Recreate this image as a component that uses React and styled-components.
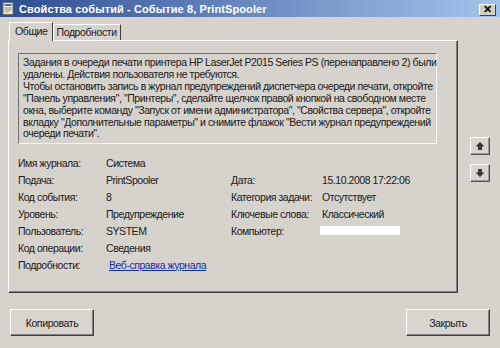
import React from 'react';
import styled, { createGlobalStyle } from 'styled-components';

const GlobalStyle = createGlobalStyle`
  html, body {
    margin: 0;
    padding: 0;
    width: 500px;
    height: 348px;
    overflow: hidden;
    background: #d4d0c8;
  }
  body {
    font-family: "Liberation Sans", Arial, sans-serif;
    color: #1a1a1a;
  }
`;

const Window = styled.div`
  width: 500px;
  height: 348px;
  display: flex;
  flex-direction: column;
  background: #d6d2cc;
`;

const TitleBar = styled.div`
  height: 17px;
  display: flex;
  align-items: center;
  padding: 0 4px 0 2px;
  background: linear-gradient(90deg, #2c4c90 0%, #5878b4 35%, #a2c4ec 100%);
`;

const TitleIcon = styled.svg`
  width: 13px;
  height: 13px;
  flex: none;
`;

const TitleText = styled.span`
  margin-left: 4px;
  flex: 1;
  color: #fff;
  font-weight: bold;
  font-size: 11px;
  letter-spacing: 0.1px;
  white-space: nowrap;
`;

const CloseBox = styled.div`
  width: 17px;
  height: 12px;
  margin-top: 2px;
  box-sizing: border-box;
  display: flex;
  align-items: center;
  justify-content: center;
  background: #d4d0c8;
  border: 1px solid;
  border-color: #fff #404040 #404040 #fff;
  font-size: 11px;
  font-weight: bold;
  line-height: 1;
  color: #000;
`;

const Body = styled.div`
  display: flex;
  padding: 5px 0 0 8px;
`;

const Sheet = styled.div`
  width: 450px;
  display: flex;
  flex-direction: column;
`;

const TabRow = styled.div`
  display: flex;
  align-items: flex-end;
  height: 18px;
  padding-left: 1px;
`;

const Tab = styled.div`
  box-sizing: border-box;
  height: ${p => (p.$active ? '19px' : '16px')};
  padding: ${p => (p.$active ? '2px 4px 0 5px' : '1px 3px 0')};
  margin-bottom: ${p => (p.$active ? '-1px' : '0')};
  border: 1px solid;
  border-bottom: none;
  border-color: #fff #404040 transparent #fff;
  background: #d6d2cc;
  font-size: 10.5px;
  letter-spacing: -0.4px;
  position: relative;
  z-index: ${p => (p.$active ? 2 : 1)};
`;

const Panel = styled.div`
  box-sizing: border-box;
  height: 253px;
  border: 1px solid;
  border-color: #fff #404040 #404040 #fff;
  box-shadow: inset -1px -1px 0 #808080;
  padding: 12px 20px 0 9px;
`;

const Description = styled.div`
  box-sizing: border-box;
  height: 91px;
  border: 1px solid;
  border-color: #707070 #f4f4f4 #f4f4f4 #707070;
  padding: 3px 4px;
  font-size: 10.5px;
  line-height: 11.9px;
  letter-spacing: -0.42px;
`;

const Line = styled.div`
  white-space: nowrap;
`;

const Fields = styled.div`
  display: grid;
  grid-template-columns: 88px 125px 91px 1fr;
  grid-auto-rows: 17px;
  align-items: center;
  margin-top: 10px;
  font-size: 10.5px;
  letter-spacing: -0.45px;
`;

const Cell = styled.div`
  white-space: nowrap;
`;

const Link = styled.a`
  color: #1030b0;
  text-decoration: underline;
  margin-left: 3px;
`;

const Redacted = styled.div`
  width: 80px;
  height: 9px;
  margin-left: -2px;
  background: #fff;
`;

const Side = styled.div`
  display: flex;
  flex-direction: column;
  gap: 9px;
  padding: 115px 0 0 12px;
`;

const ArrowButton = styled.div`
  box-sizing: border-box;
  width: 20px;
  height: 18px;
  display: flex;
  align-items: center;
  justify-content: center;
  background: #d8d4ce;
  border: 1px solid;
  border-color: #fff #505050 #505050 #fff;
  box-shadow: inset -1px -1px 0 #999;
`;

const Footer = styled.div`
  display: flex;
  justify-content: space-between;
  padding: 16px 10px 0 10px;
`;

const Button = styled.div`
  box-sizing: border-box;
  width: 84px;
  height: 27px;
  display: flex;
  align-items: center;
  justify-content: center;
  background: #d8d4ce;
  border: 1px solid;
  border-color: #fff #404040 #404040 #fff;
  box-shadow: inset -1px -1px 0 #808080;
  font-size: 10.5px;
  letter-spacing: -0.4px;
`;

const Arrow = ({ down }) => (
  <svg width="10" height="10" viewBox="0 0 10 10" style={down ? { transform: 'rotate(180deg)' } : undefined}>
    <path d="M5 1 L9.5 5.5 L7 5.5 L7 9 L3 9 L3 5.5 L0.5 5.5 Z" fill="#3a3a3a" />
  </svg>
);

const description = [
  'Задания в очереди печати принтера HP LaserJet P2015 Series PS (перенаправлено 2) были',
  'удалены. Действия пользователя не требуются.',
  'Чтобы остановить запись в журнал предупреждений диспетчера очереди печати, откройте',
  '"Панель управления", "Принтеры", сделайте щелчок правой кнопкой на свободном месте',
  'окна, выберите команду "Запуск от имени администратора", "Свойства сервера", откройте',
  'вкладку "Дополнительные параметры" и снимите флажок "Вести журнал предупреждений',
  'очереди печати".',
];

const fields = [
  ['Имя журнала:', 'Система', '', ''],
  ['Подача:', 'PrintSpooler', 'Дата:', '15.10.2008 17:22:06'],
  ['Код события:', '8', 'Категория задачи:', 'Отсутствует'],
  ['Уровень:', 'Предупреждение', 'Ключевые слова:', 'Классический'],
  ['Пользователь:', 'SYSTEM', 'Компьютер:', null],
  ['Код операции:', 'Сведения', '', ''],
];

export default function App() {
  return (
    <>
      <GlobalStyle />
      <Window>
        <TitleBar>
          <TitleIcon viewBox="0 0 13 13">
            <rect x="1" y="0.5" width="10" height="12" fill="#f4f0d8" stroke="#6a6a6a" />
            <rect x="2.5" y="2" width="7" height="2" fill="#4a6ab0" />
            <rect x="2.5" y="5.5" width="7" height="1" fill="#888" />
            <rect x="2.5" y="7.5" width="7" height="1" fill="#888" />
            <rect x="2.5" y="9.5" width="5" height="1" fill="#d8a020" />
          </TitleIcon>
          <TitleText>Свойства событий - Событие 8, PrintSpooler</TitleText>
          <CloseBox>✕</CloseBox>
        </TitleBar>
        <Body>
          <Sheet>
            <TabRow>
              <Tab $active>Общие</Tab>
              <Tab>Подробности</Tab>
            </TabRow>
            <Panel>
              <Description>
                {description.map((l, i) => (
                  <Line key={i}>{l}</Line>
                ))}
              </Description>
              <Fields>
                {fields.map((row, i) => (
                  <React.Fragment key={i}>
                    <Cell>{row[0]}</Cell>
                    <Cell>{row[1]}</Cell>
                    <Cell>{row[2]}</Cell>
                    <Cell>{row[3] === null ? <Redacted /> : row[3]}</Cell>
                  </React.Fragment>
                ))}
                <Cell>Подробности:</Cell>
                <Cell>
                  <Link href="#">Веб-справка журнала</Link>
                </Cell>
              </Fields>
            </Panel>
          </Sheet>
          <Side>
            <ArrowButton><Arrow /></ArrowButton>
            <ArrowButton><Arrow down /></ArrowButton>
          </Side>
        </Body>
        <Footer>
          <Button>Копировать</Button>
          <Button>Закрыть</Button>
        </Footer>
      </Window>
    </>
  );
}
